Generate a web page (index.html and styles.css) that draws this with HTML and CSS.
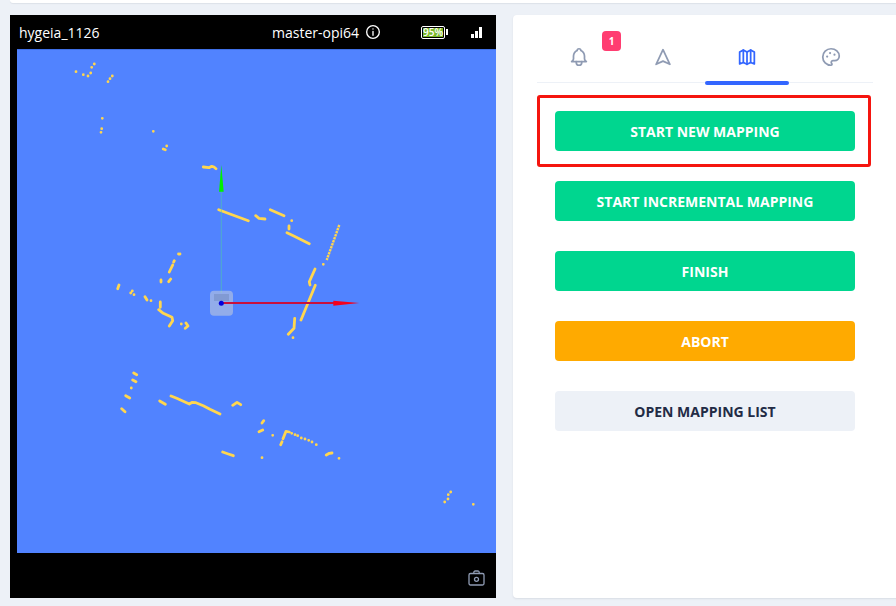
FILE: index.html
```html
<!DOCTYPE html>
<html lang="en">
<head>
<meta charset="utf-8">
<title>Mapping</title>
<link rel="stylesheet" href="styles.css">
</head>
<body>
<div class="topbar"></div>
<main class="layout">
  <section class="viewer">
    <header class="status">
      <span class="robot-name">hygeia_1126</span>
      <span class="master">master-opi64
        <svg class="info" viewBox="0 0 24 24"><circle cx="12" cy="12" r="9.5"/><path d="M12 11v6M12 7.2v.3"/></svg>
      </span>
      <span class="battery"><span class="battery-fill">95%</span></span>
      <span class="battery-nub"></span>
      <span class="signal"><i class="bar-1"></i><i class="bar-2"></i><i class="bar-3"></i></span>
    </header>
    <div class="map">
      <svg class="map-canvas" viewBox="17 49 479 504">
        <path class="scan" d="M76 71.7h.01M83.3 74.7h.01M88 76h.01M90.7 73h.01M91.7 67.3h.01M94.3 64h.01M112.3 76h.01M110 78.7h.01M108 81.7h.01M102.3 118.3h.01M101.7 128.7h.01M101 132.3h.01M153.3 131.3h.01M166.7 146h.01M163.3 149L165.3 149.7M203.3 167L209 167.7L211.7 166.3L214 167L216 168.7M218.7 209.7L230 214L248.3 220.7M255.7 215.7L259 218.3L265 219M270.3 209.7L284 215.7M291.7 220.7h.01M289 226V229M287 232.7L293.3 235.7L309.3 243.7M323.3 264.3h.01M315 269L309.3 281.7L310 285M315.3 285.3L301 320M294.7 318.3L294 328.3L288.3 334.3M293 337.7h.01M180 254h.01M178.5 254h.01M174.3 260.7L173.7 262M172.7 265L169.3 272M161 280V282M170.7 279L168.7 281.7M119 285L117.7 288.7M132.3 291h.01M130.7 293h.01M134 294.7h.01M145 296.7L147 300M151 300.7h.01M160.3 302V307.3M158.7 309.7L163.3 313.3L172 317.3L172.7 320.7L169.3 326M181.3 324h.01M186 323L188 326L185.3 328.3M133.7 373L136.7 374.7M132.7 380L136 381.7M131.3 388h.01M125.7 395.7L129.7 398M121.7 408.7L125 411.7M159.7 401L165.3 404.3M171 396L176.7 398.3L189.3 404L192.3 402.3L196 402.7L203.3 405.7L210 409.3L220 414M232.7 405.3L237 402.3L240.7 404.7M263.7 420.7L262 423M259 431.7L262.7 430M272.7 435.3h.01M280.7 444.7L282 441.7M283 438.7L286 431.3L289.3 432M291.7 433.3h.01M295 434.7h.01M297.7 435.7h.01M301.3 438h.01M305 439h.01M308.7 440.3h.01M312 442h.01M316.3 444.7h.01M222.7 452L228.3 454L233.3 455.7M262 457.7h.01M326.3 455L329.3 453.3L332 453M339 458.3h.01M450.7 492h.01M448.3 494.7h.01M448 499h.01M444.7 502h.01M473.3 504.3h.01"/>
        <path class="scan scan-dotted" d="M339.3 225L326.7 260"/>
        <path class="y-axis" d="M221.3 191V293"/>
        <path class="y-head" d="M221.3 165L223.7 191.7H219Z"/>
        <rect class="robot-body" x="210" y="290.700" width="23" height="25" rx="4"/>
        <rect class="robot-top" x="214" y="294" width="15" height="7"/>
        <path class="x-axis" d="M222 303H334"/>
        <path class="x-head" d="M333.300 300.700L359.300 303L333.300 305.700Z"/>
        <circle class="origin" cx="221.300" cy="303.300" r="2.500"/>
      </svg>
    </div>
    <footer class="viewer-foot">
      <svg class="camera" viewBox="0 0 17 16"><path d="M2.500 3.500H14.500A1.500 1.500 0 0 1 16 5V13.500A1.500 1.500 0 0 1 14.500 15H2.500A1.500 1.500 0 0 1 1 13.500V5A1.500 1.500 0 0 1 2.500 3.500Z"/><circle cx="8.500" cy="9.300" r="2"/><path d="M5.800 3.500V2.300A1.300 1.300 0 0 1 7.100 1H9.900A1.300 1.300 0 0 1 11.200 2.300V3.500"/></svg>
    </footer>
  </section>
  <aside class="panel">
    <nav class="tabs">
      <div class="tab">
        <svg class="tab-icon" viewBox="0 0 24 24"><path d="M10 5a2 2 0 1 1 4 0a7 7 0 0 1 4 6v3a4 4 0 0 0 2 3H4a4 4 0 0 0 2-3v-3a7 7 0 0 1 4-6"/><path d="M9 17v1a3 3 0 0 0 6 0v-1"/></svg>
        <span class="badge">1</span>
      </div>
      <div class="tab">
        <svg class="tab-icon" viewBox="0 0 24 24"><path d="M12 4L19.500 20L12 16.500L4.500 20Z"/></svg>
      </div>
      <div class="tab tab-active">
        <svg class="tab-icon" viewBox="0 0 24 24"><path d="M4 6.500L8 4.500L12 6.500L16 4.500L20 6.500V19.500L16 18L12 20L8 18L4 19.500Z"/><path d="M8 4.500V18M12 6.500V20M16 4.500V18"/></svg>
      </div>
      <div class="tab">
        <svg class="tab-icon" viewBox="0 0 24 24"><path d="M12 21a9 9 0 1 1 0-18c5 0 9 3.600 9 8a5 5 0 0 1-5 5h-2a1.800 1.800 0 0 0-1.200 3.100c.6.800.2 1.900-.8 1.900"/><path class="dot" d="M7.800 11.500v.01M11 7.700v.01M15.800 9.500v.01"/></svg>
      </div>
    </nav>
    <div class="actions">
      <button class="btn btn-success">START NEW MAPPING</button>
      <button class="btn btn-success">START INCREMENTAL MAPPING</button>
      <button class="btn btn-success">FINISH</button>
      <button class="btn btn-warning">ABORT</button>
      <button class="btn btn-basic">OPEN MAPPING LIST</button>
      <div class="highlight"></div>
    </div>
  </aside>
</main>
</body>
</html>
```
FILE: styles.css
```css
* { box-sizing: border-box; }
html, body { height: 100%; }
body {
  margin: 0;
  overflow: hidden;
  background: #edf1f7;
  font-family: "Open Sans", sans-serif;
}
.topbar {
  height: 3px;
  margin-left: 10px;
  background: #fff;
  border-bottom-left-radius: 3px;
  box-shadow: 0 1px 1px rgba(44, 51, 73, .08);
}
.layout {
  display: flex;
  gap: 17px;
  height: 583px;
  margin: 12px 0 0 10px;
}
.viewer {
  display: flex;
  flex-direction: column;
  flex: none;
  width: 486px;
  background: #000;
}
.status {
  display: flex;
  align-items: center;
  height: 34px;
  padding-left: 9px;
  color: #fff;
  font-size: 14px;
}
.robot-name { width: 253px; }
.master { display: flex; align-items: center; width: 149px; }
.info {
  width: 16px;
  height: 16px;
  margin-left: 6px;
  fill: none;
  stroke: #fff;
  stroke-width: 2;
  stroke-linecap: round;
}
.battery {
  display: flex;
  width: 24px;
  height: 13px;
  padding: 1px;
  border: 1px solid #fff;
  border-radius: 2px;
}
.battery-fill {
  width: 20px;
  background: #7ab929;
  color: #fff;
  font-size: 10px;
  font-weight: 600;
  line-height: 9px;
  text-align: center;
}
.battery-nub {
  width: 1.500px;
  height: 6px;
  margin-left: 1px;
  background: #fff;
}
.signal {
  display: flex;
  align-items: flex-end;
  gap: 1px;
  height: 11px;
  margin-left: 23px;
}
.signal i { display: block; width: 3px; background: #fff; }
.bar-1 { height: 4px; }
.bar-2 { height: 7px; }
.bar-3 { height: 11px; }
.map {
  flex: none;
  height: 504px;
  margin-left: 7px;
  background: #5183ff;
  border-top: 1px solid #3f6fe6;
}
.map-canvas { display: block; width: 479px; height: 504px; margin-top: -1px; }
.scan {
  fill: none;
  stroke: #ffd64f;
  stroke-width: 2.800;
  stroke-linecap: round;
  stroke-linejoin: round;
}
.scan-dotted {
  stroke-width: 2.400;
  stroke-linecap: butt;
  stroke-dasharray: 2.400 .8;
}
.y-axis { stroke: #4fd0a0; stroke-width: 1; opacity: .55; }
.y-head { fill: #00f000; }
.robot-body { fill: #c9ced8; fill-opacity: .55; }
.robot-top { fill: #5a6f9f; fill-opacity: .3; }
.x-axis { stroke: #c8103c; stroke-width: 2; }
.x-head { fill: #f5001c; }
.origin { fill: #0000dc; }
.viewer-foot {
  display: flex;
  flex: 1;
  justify-content: flex-end;
  align-items: flex-end;
  padding: 0 11px 12px 0;
}
.camera {
  width: 17px;
  height: 16px;
  fill: none;
  stroke: #8f9bb3;
  stroke-width: 1.300;
}
.panel {
  flex: none;
  width: 400px;
  padding: 0 24px;
  background: #fff;
  border-radius: 4px;
  box-shadow: 0 1px 2px rgba(44, 51, 73, .1);
}
.tabs {
  display: flex;
  width: 336px;
  height: 68px;
  border-bottom: 1px solid #edf1f7;
}
.tab {
  position: relative;
  display: flex;
  flex: 1;
  align-items: center;
  justify-content: center;
  padding-top: 17px;
}
.tab-icon {
  width: 22px;
  height: 22px;
  fill: none;
  stroke: #8f9bb3;
  stroke-width: 1.900;
  stroke-linecap: round;
  stroke-linejoin: round;
}
.tab-active .tab-icon { stroke: #3366ff; }
.tab-active::after {
  content: "";
  position: absolute;
  left: 0;
  right: 0;
  bottom: -3px;
  height: 4px;
  border-radius: 2px;
  background: #3366ff;
}
.dot { stroke-width: 2.400; }
.badge {
  position: absolute;
  top: 16px;
  left: 65px;
  width: 19px;
  height: 20px;
  border-radius: 4px;
  background: #ff3d71;
  color: #fff;
  font-size: 10px;
  font-weight: 700;
  line-height: 20px;
  text-align: center;
}
.actions {
  position: relative;
  display: flex;
  flex-direction: column;
  gap: 30px;
  width: 336px;
  padding: 28px 18px 0;
}
.btn {
  width: 300px;
  height: 40px;
  padding: 0;
  border: 0;
  border-radius: 4px;
  color: #fff;
  font-family: "Open Sans", sans-serif;
  font-size: 14px;
  font-weight: 700;
}
.btn-success { background: #00d68f; }
.btn-warning { background: #ffaa00; }
.btn-basic { background: #edf1f7; color: #222b45; }
.highlight {
  position: absolute;
  top: 12px;
  left: 0;
  width: 334px;
  height: 72px;
  border: 3px solid #f5150f;
  border-radius: 3px;
}
```
